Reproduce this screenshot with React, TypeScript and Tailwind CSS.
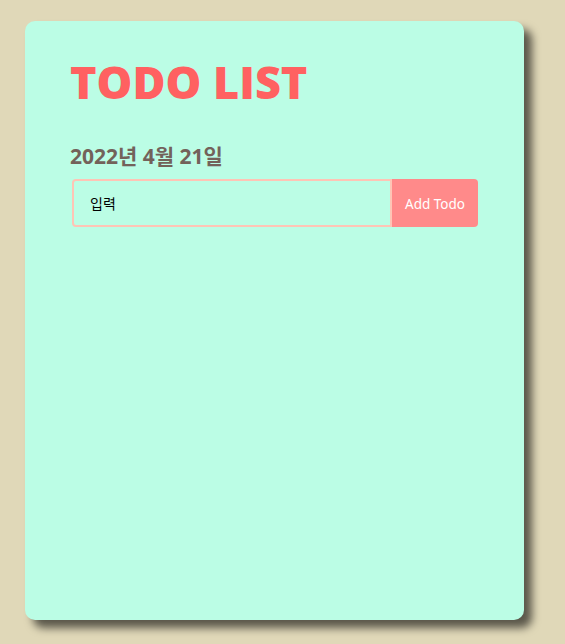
import React from "react";

export default function App() {
  return (
    <div className="w-[565px] h-[644px] bg-[#e0d8b8] pt-[21px] pl-[25px]" style={{ fontFamily: '"Open Sans", "Noto Sans CJK KR", sans-serif' }}>
      <div className="w-[499px] h-[599px] bg-[#bbfde5] rounded-[10px] shadow-[8px_8px_8px_rgba(0,0,0,0.6)] pl-[45px] pt-[30px]">
        <h1 className="text-[45px] leading-[62px] font-extrabold text-[#ff6161]">TODO LIST</h1>
        <div className="mt-[30px] text-[21px] leading-[27px] font-bold text-[#73625a]">2022년 4월 21일</div>
        <div className="mt-[9px] flex ml-[2px] w-[406px] h-[48px]">
          <input
            className="w-[320px] h-full border-2 border-[#ffc4b5] rounded-l-[4px] bg-transparent pl-[16px] text-[14px] text-black outline-none placeholder:text-black"
            style={{ fontFamily: '"Noto Sans CJK KR", sans-serif' }}
            placeholder="입력"
          />
          <button className="w-[86px] h-full bg-[#ff8a8a] text-white text-[13.5px] pt-[3px] rounded-r-[4px]" style={{ fontFamily: '"Noto Sans", sans-serif' }}>
            Add Todo
          </button>
        </div>
      </div>
    </div>
  );
}
